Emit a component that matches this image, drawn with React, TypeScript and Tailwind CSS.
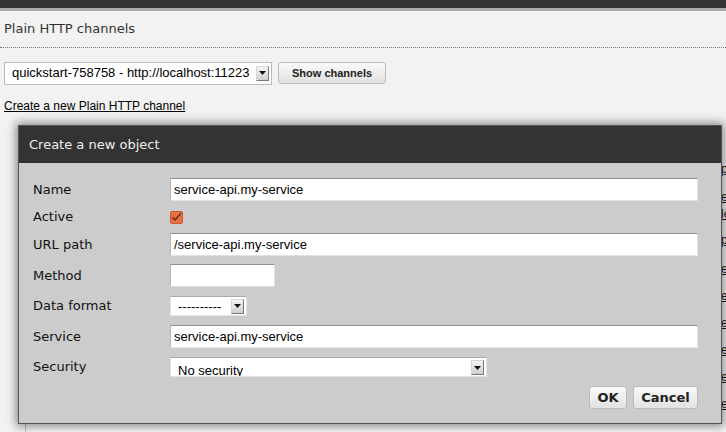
import React from 'react';

const sans = { fontFamily: '"DejaVu Sans", Verdana, sans-serif' };
const arial = { fontFamily: '"Liberation Sans", Arial, sans-serif' };

const SelectArrow = ({ className = '' }: { className?: string }) => (
  <span className={`flex items-center justify-center w-[13px] h-[15px] bg-gradient-to-b from-[#f4f4f4] to-[#cfcfcf] border border-[#d8d8d8] border-r-[#777] border-b-[#777] ${className}`}>
    <svg width="7" height="4" viewBox="0 0 7 4"><path d="M0 0h7L3.5 4z" fill="#111" /></svg>
  </span>
);

const TextInput = ({ value = '', className = '' }: { value?: string; className?: string }) => (
  <div className={`h-[23px] bg-white border border-[#e2e2e2] border-t-[#8f8f8f] border-l-[#b8b8b8] flex items-center pl-[3px] text-[13px] text-black ${className}`} style={arial}>
    {value}
  </div>
);

const Row = ({ label, children, className = '' }: { label: string; children: React.ReactNode; className?: string }) => (
  <div className={`grid grid-cols-[137px_1fr] items-center ${className}`}>
    <span className="text-[13px] text-[#111]" style={sans}>{label}</span>
    <div className="flex items-center">{children}</div>
  </div>
);

const bgLinks = [
  { y: 160, t: 'p' }, { y: 188, t: 'e' }, { y: 205, t: 'le' }, { y: 231, t: 'p' },
  { y: 260, t: 'e' }, { y: 287, t: 'e' }, { y: 314, t: 'e' }, { y: 341, t: 'e' },
  { y: 368, t: 'e' }, { y: 395, t: 'e' },
];

export default function App() {
  return (
    <div className="relative w-[726px] h-[432px] overflow-hidden bg-[#f2f2f2]">
      <div className="h-[8px] bg-[#333]" />
      <div className="h-[3px] bg-[#a9a9a9]" />

      <div className="px-[4px] pt-[8px] pb-[8px] text-[13px] text-[#333]" style={sans}>Plain HTTP channels</div>
      <div className="border-t border-dotted border-[#777]" />

      <div className="flex items-center gap-[6px] px-[4px] mt-[14px]">
        <div className="w-[268px] h-[23px] bg-white border border-[#bbb] flex items-center justify-between pl-[7px] pr-[2px] text-[13px] text-black" style={arial}>
          <span>quickstart-758758 - http://localhost:11223</span>
          <SelectArrow />
        </div>
        <button className="h-[22px] px-[13px] rounded-[3px] border border-[#bdbdbd] bg-gradient-to-b from-[#fafafa] to-[#e0e0e0] text-[11px] font-bold text-[#222]" style={arial}>
          Show channels
        </button>
      </div>

      <div className="px-[4px] mt-[12px] text-[12px] text-black underline" style={arial}>Create a new Plain HTTP channel</div>

      {/* page content behind the dialog */}
      {bgLinks.map(l => (
        <span key={l.y} className="absolute left-[721px] text-[12px] text-[#1a1a1a] underline" style={{ ...arial, top: l.y }}>{l.t}</span>
      ))}
      <div className="absolute left-[25px] top-[424px] h-[10px] border-l border-[#bbb]" />

      {/* dialog */}
      <div className="absolute left-[18px] top-[125px] w-[704px] h-[299px] border border-[#555] shadow-[0_0_9px_2px_rgba(0,0,0,0.45)] flex flex-col">
        <div className="h-[37px] bg-[#333] flex items-center pl-[10px] text-[13px] text-[#eee]" style={sans}>Create a new object</div>
        <div className="flex-1 bg-[#cccccc] pl-[14px] pr-[23px] pt-[15px] flex flex-col">
          <Row label="Name"><TextInput value="service-api.my-service" className="w-full" /></Row>
          <Row label="Active" className="h-[24px] mt-[4px]">
            <span className="w-[13px] h-[13px] rounded-[2px] bg-[#e8713f] border border-[#c65a2c] flex items-center justify-center">
              <svg width="11" height="10" viewBox="0 0 11 10"><path d="M1.5 5.2 4.2 8 9.8 1.2" fill="none" stroke="#5e3020" strokeWidth="1.4" /></svg>
            </span>
          </Row>
          <Row label="URL path" className="mt-[4px]"><TextInput value="/service-api.my-service" className="w-full" /></Row>
          <Row label="Method" className="mt-[8px]"><TextInput className="w-[105px]" /></Row>
          <Row label="Data format" className="mt-[9px]">
            <div className="w-[77px] h-[20px] bg-white border border-[#e2e2e2] border-t-[#aaa] flex items-center justify-between pl-[7px] pr-[2px] text-[13px] text-black" style={arial}>
              <span className="leading-none">----------</span>
              <SelectArrow />
            </div>
          </Row>
          <Row label="Service" className="mt-[9px]"><TextInput value="service-api.my-service" className="w-full" /></Row>
          <Row label="Security" className="mt-[9px]">
            <div className="w-[317px] h-[20px] bg-white border border-[#e2e2e2] border-t-[#aaa] flex items-start justify-between pl-[7px] pr-[2px] pt-[2px] overflow-hidden text-[13px] text-black" style={arial}>
              <span className="mt-[1px]">No security</span>
              <SelectArrow />
            </div>
          </Row>
          <div className="flex justify-end gap-[6px] mt-[9px]">
            <button className="h-[23px] w-[38px] rounded-[3px] border border-[#bbb] bg-gradient-to-b from-[#fafafa] to-[#e2e2e2] text-[13px] font-bold text-[#222]" style={sans}>OK</button>
            <button className="h-[23px] w-[65px] rounded-[3px] border border-[#bbb] bg-gradient-to-b from-[#fafafa] to-[#e2e2e2] text-[13px] font-bold text-[#222]" style={sans}>Cancel</button>
          </div>
        </div>
      </div>
    </div>
  );
}
